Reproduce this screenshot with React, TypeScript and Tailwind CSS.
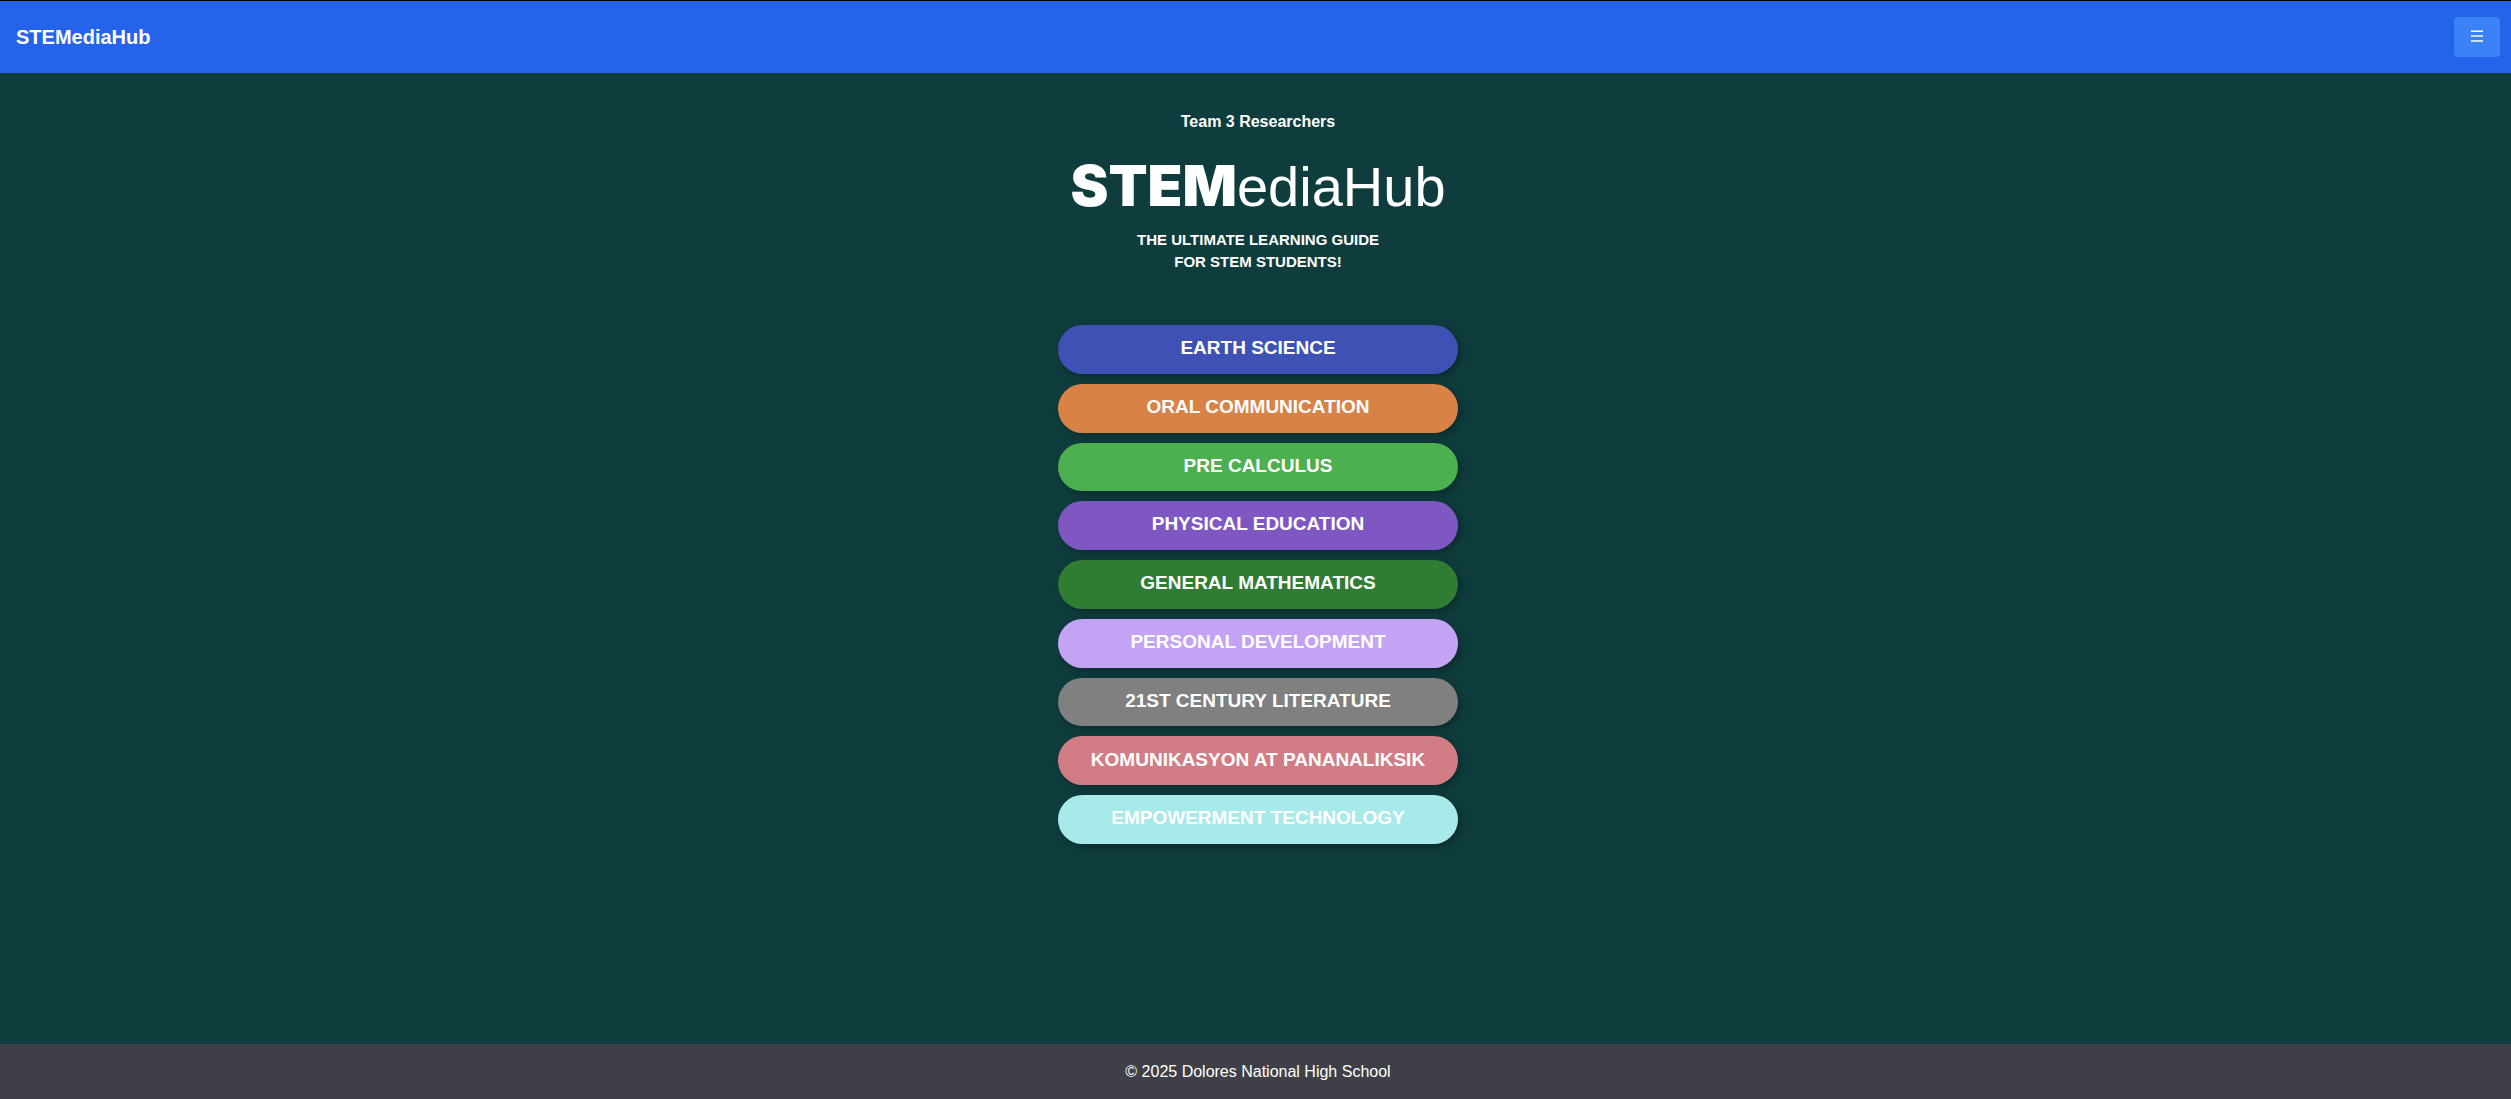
const subjects = [
  { name: 'EARTH SCIENCE', color: 'bg-[#3f51b5]' },
  { name: 'ORAL COMMUNICATION', color: 'bg-[#d98246]' },
  { name: 'PRE CALCULUS', color: 'bg-[#4caf50]' },
  { name: 'PHYSICAL EDUCATION', color: 'bg-[#7e57c2]' },
  { name: 'GENERAL MATHEMATICS', color: 'bg-[#2e7d32]' },
  { name: 'PERSONAL DEVELOPMENT', color: 'bg-[#c4a3f5]' },
  { name: '21ST CENTURY LITERATURE', color: 'bg-[#808080]' },
  { name: 'KOMUNIKASYON AT PANANALIKSIK', color: 'bg-[#d27d85]' },
  { name: 'EMPOWERMENT TECHNOLOGY', color: 'bg-[#a8eae9]' },
];

export default function App() {
  return (
    <div className="flex min-h-screen flex-col bg-[#0f3d3e] font-['Liberation_Sans',Arial,sans-serif] text-white">
      <header className="flex items-center justify-between border-t border-black bg-[#2563eb] py-4 pr-[11px] pl-4">
        <a href="#" className="text-xl font-bold">STEMediaHub</a>
        <button type="button" aria-label="Menu" className="flex h-10 items-center rounded bg-[#3b82f6] px-[17px] pb-0.5">
          <svg width="12" height="12" viewBox="0 0 12 12" fill="white" aria-hidden="true">
            <path d="M0 .4h12v1.6H0zM0 5.2h12v1.6H0zM0 10.2h12v1.6H0z" />
          </svg>
        </button>
      </header>
      <main className="flex flex-1 flex-col items-center pt-[37px] pl-[5px] text-center">
        <p className="font-bold">Team 3 Researchers</p>
        <h1 className="mt-[26px] text-[56px] leading-[52px]">
          <span className="font-['Inter',sans-serif] text-[57px] font-black">STEM</span>ediaHub
        </h1>
        <p className="mt-4 text-[15px] leading-[22px] font-bold">
          THE ULTIMATE LEARNING GUIDE
          <br />
          FOR STEM STUDENTS!
        </p>
        <nav className="mt-[52px] grid h-[519px] w-[400px] auto-rows-fr gap-2.5">
          {subjects.map((s) => (
            <button
              key={s.name}
              type="button"
              className={`rounded-full pb-0.5 text-[19px] font-bold shadow-[3px_3px_8px_rgba(0,0,0,0.3)] ${s.color}`}
            >
              {s.name}
            </button>
          ))}
        </nav>
      </main>
      <footer className="bg-zinc-700 pt-4 pb-[15px] pl-[5px] text-center">© 2025 Dolores National High School</footer>
    </div>
  );
}
